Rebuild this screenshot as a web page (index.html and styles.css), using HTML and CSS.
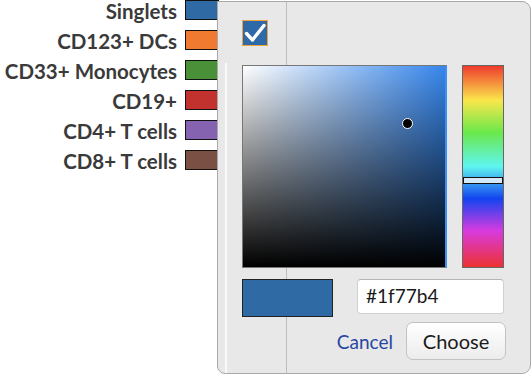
FILE: index.html
```html
<!DOCTYPE html>
<html lang="en">
<head>
  <meta charset="UTF-8" />
  <meta name="viewport" content="width=device-width, initial-scale=1.0" />
  <title>Legend colour</title>
  <link rel="stylesheet" href="styles.css">
</head>
<body>
<div class="legend">
  <div class="legend-label">Singlets</div><div class="swatch blue"></div>
  <div class="legend-label">CD123+ DCs</div><div class="swatch orange"></div>
  <div class="legend-label">CD33+ Monocytes</div><div class="swatch green"></div>
  <div class="legend-label">CD19+</div><div class="swatch red"></div>
  <div class="legend-label">CD4+ T cells</div><div class="swatch purple"></div>
  <div class="legend-label">CD8+ T cells</div><div class="swatch brown"></div>
</div>

<div class="picker-dialog">
  <div class="guide-line"></div>
  <div class="edge-line"></div>
  <div class="picker-body">
    <div class="check-box">
      <svg width="24" height="24" viewBox="0 0 24 24">
        <path d="M3.5 12.5 L9.5 19 L21 4.5" fill="none" stroke="white" stroke-width="3.4" stroke-linecap="round" stroke-linejoin="round"/>
      </svg>
    </div>
    <div class="picker-row">
      <div class="sv-square">
        <span class="sv-dot"></span>
      </div>
      <div class="hue-bar">
        <span class="hue-handle"></span>
      </div>
    </div>
    <div class="value-row">
      <div class="preview"></div>
      <input class="hex-input" type="text" value="#1f77b4" />
    </div>
    <div class="actions">
      <a class="cancel-link" href="#">Cancel</a>
      <button class="choose-btn">Choose</button>
    </div>
  </div>
</div>
</body>
</html>
```

FILE: styles.css
```css
body {
  margin: 0;
  background: white;
  font-family: Lato, "Open Sans", sans-serif;
  color: #333;
}
.legend {
  display: grid;
  grid-template-columns: 177px 34px;
  column-gap: 8px;
  row-gap: 10px;
  width: 219px;
}
.legend-label {
  font-size: 20.5px;
  font-weight: 700;
  line-height: 20px;
  padding-top: 1px;
  height: 19px;
  text-align: right;
  color: #3a3a3a;
  white-space: nowrap;
}
.swatch {
  height: 20px;
  box-sizing: border-box;
  border: 1.5px solid #111;
}
.blue { background: #2f6aa5; }
.orange { background: #f07b30; }
.green { background: #4a9039; }
.red { background: #c1322f; }
.purple { background: #8563b1; }
.brown { background: #7a5045; }

.picker-dialog {
  position: absolute;
  left: 217px;
  top: 1px;
  width: 312px;
  height: 371px;
  background: #e8e8e8;
  border: 1px solid #a9a9a9;
  border-radius: 0 9px 9px 8px;
  overflow: hidden;
}
.guide-line {
  position: absolute;
  left: 68px;
  top: 0;
  bottom: 0;
  width: 1px;
  background: #bdbdbd;
}
.edge-line {
  position: absolute;
  left: 7px;
  top: 61px;
  bottom: 0;
  width: 2px;
  background: #fafafa;
}
.picker-body {
  position: relative;
  padding: 18px 0 0 24px;
}
.check-box {
  width: 26px;
  height: 26px;
  box-sizing: border-box;
  border: 1.5px solid #f3a23a;
  background: #2f6aa8;
  display: flex;
  align-items: center;
  justify-content: center;
}
.picker-row {
  display: flex;
  gap: 15px;
  margin-top: 19px;
}
.sv-square {
  position: relative;
  width: 205px;
  height: 203px;
  box-sizing: border-box;
  border: 1.5px solid #777;
  border-right: 2px solid #3d8ef5;
  background:
    linear-gradient(to top, #000, rgba(0,0,0,0)),
    linear-gradient(to right, #fff, #3686ec);
}
.sv-dot {
  position: absolute;
  left: 159px;
  top: 52px;
  width: 9px;
  height: 9px;
  border-radius: 50%;
  background: #000;
  border: 1.5px solid #fff;
}
.hue-bar {
  position: relative;
  width: 42px;
  height: 203px;
  box-sizing: border-box;
  border: 1.5px solid #666;
  background: linear-gradient(to bottom,
    #ef3b2c 0%, #fbe64c 17%, #6be84a 33%, #5ff5f0 50%,
    #1244f0 66%, #d83be0 82%, #ed3131 100%);
}
.hue-handle {
  position: absolute;
  left: 0;
  right: 0;
  top: 111px;
  height: 5px;
  background: #d5e8f7;
  border: 1.5px solid #111;
}
.value-row {
  display: flex;
  gap: 24px;
  margin-top: 11px;
}
.preview {
  width: 91px;
  height: 38px;
  box-sizing: border-box;
  border: 1px solid #222;
  background: #2f6aa5;
}
.hex-input {
  width: 147px;
  height: 35px;
  box-sizing: border-box;
  border: 1px solid #d0d0d0;
  border-top-color: #b5b5b5;
  border-radius: 4px;
  background: white;
  padding: 0 8px 2px;
  font-family: Lato, sans-serif;
  font-size: 19px;
  color: #1a1a1a;
  outline: none;
}
.actions {
  display: flex;
  justify-content: flex-end;
  align-items: center;
  gap: 13px;
  width: 264px;
  margin-top: 5px;
}
.cancel-link {
  font-size: 19px;
  color: #2747a3;
  text-decoration: none;
}
.choose-btn {
  width: 100px;
  height: 38px;
  border: 1px solid #c2c2c2;
  border-radius: 7px;
  background: linear-gradient(to bottom, #ffffff, #ececec);
  font-family: Lato, sans-serif;
  font-size: 20px;
  color: #1a1a1a;
  padding: 0;
}
```
